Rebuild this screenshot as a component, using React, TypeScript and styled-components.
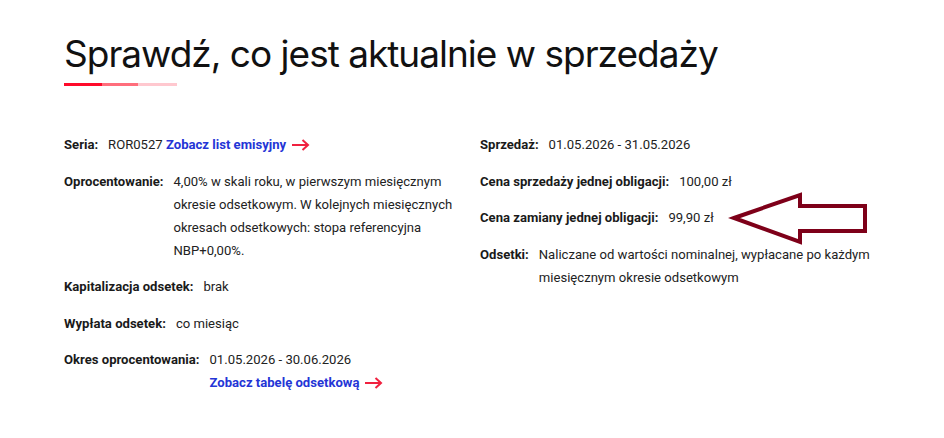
import React from 'react';
import styled, { createGlobalStyle } from 'styled-components';

const GlobalStyle = createGlobalStyle`
  body {
    margin: 0;
    background: #fff;
    font-family: Roboto, "Liberation Sans", sans-serif;
    color: #1c1c1c;
  }
`;

const Page = styled.div`
  position: relative;
  width: 944px;
  height: 438px;
  padding: 28px 0 0 64px;
  box-sizing: border-box;
`;

const Title = styled.h1`
  margin: 0;
  font-family: Inter, "Open Sans", sans-serif;
  font-weight: 400;
  font-size: 37px;
  line-height: 52px;
  color: #111;
  letter-spacing: -1px;
`;

const Underline = styled.div`
  display: flex;
  margin-top: 3px;
  height: 3px;
  width: 113px;
`;

const Bar = styled.span<{ $color: string; $w: number }>`
  width: ${p => p.$w}px;
  background: ${p => p.$color};
`;

const Columns = styled.div`
  display: grid;
  grid-template-columns: 400px 400px;
  column-gap: 16px;
  margin-top: 47px;
`;

const Column = styled.div`
  display: flex;
  flex-direction: column;
  gap: 13.5px;
`;

const Row = styled.div`
  display: flex;
  gap: 10px;
  font-size: 13.1px;
  line-height: 23px;
`;

const Label = styled.span`
  font-weight: 700;
  white-space: nowrap;
  color: #1a1a1a;
`;

const Value = styled.span`
  color: #222;
`;

const LinkText = styled.a`
  color: #2435d6;
  font-weight: 700;
  text-decoration: none;
  display: inline-flex;
  align-items: center;
  gap: 5px;
`;

const Annotation = styled.svg`
  position: absolute;
  left: 728px;
  top: 190px;
`;

const RedArrow = () => (
  <svg width="19" height="12" viewBox="0 0 19 12">
    <path d="M1 6 H17 M11.5 1 L17 6 L11.5 11" fill="none" stroke="#f0213f" strokeWidth="2" />
  </svg>
);

export default function App() {
  return (
    <Page>
      <GlobalStyle />
      <Title>Sprawdź, co jest aktualnie w sprzedaży</Title>
      <Underline>
        <Bar $color="#ff0a2a" $w={38} />
        <Bar $color="#ff6e7c" $w={36} />
        <Bar $color="#ffc8cf" $w={39} />
      </Underline>
      <Columns>
        <Column>
          <Row>
            <Label>Seria:</Label>
            <Value>
              ROR0527 <LinkText href="#">Zobacz list emisyjny <RedArrow /></LinkText>
            </Value>
          </Row>
          <Row>
            <Label>Oprocentowanie:</Label>
            <Value>
              4,00% w skali roku, w pierwszym miesięcznym okresie odsetkowym. W kolejnych miesięcznych
              okresach odsetkowych: stopa referencyjna NBP+0,00%.
            </Value>
          </Row>
          <Row>
            <Label>Kapitalizacja odsetek:</Label>
            <Value>brak</Value>
          </Row>
          <Row>
            <Label>Wypłata odsetek:</Label>
            <Value>co miesiąc</Value>
          </Row>
          <Row>
            <Label>Okres oprocentowania:</Label>
            <Value>
              01.05.2026 - 30.06.2026
              <br />
              <LinkText href="#">Zobacz tabelę odsetkową <RedArrow /></LinkText>
            </Value>
          </Row>
        </Column>
        <Column>
          <Row>
            <Label>Sprzedaż:</Label>
            <Value>01.05.2026 - 31.05.2026</Value>
          </Row>
          <Row>
            <Label>Cena sprzedaży jednej obligacji:</Label>
            <Value>100,00 zł</Value>
          </Row>
          <Row>
            <Label>Cena zamiany jednej obligacji:</Label>
            <Value>99,90 zł</Value>
          </Row>
          <Row>
            <Label>Odsetki:</Label>
            <Value>
              Naliczane od wartości nominalnej, wypłacane po każdym miesięcznym okresie odsetkowym
            </Value>
          </Row>
        </Column>
      </Columns>
      <Annotation width="145" height="60" viewBox="0 0 145 60">
        <path
          d="M6 28 L72 5 L72 16 L137 16 L137 41 L72 41 L72 52 Z"
          fill="none"
          stroke="#7e0019"
          strokeWidth="4"
          strokeLinejoin="miter"
        />
      </Annotation>
    </Page>
  );
}
